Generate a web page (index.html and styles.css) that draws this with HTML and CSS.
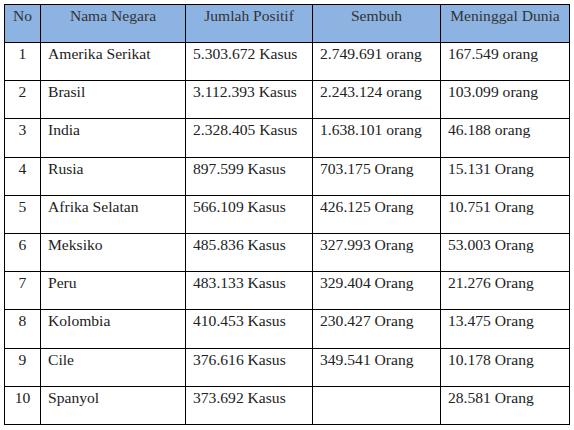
FILE: index.html
```html
<!DOCTYPE html>
<html>
<head>
<meta charset="utf-8">
<link rel="stylesheet" href="styles.css">
</head>
<body>
<table class="data">
  <colgroup>
    <col class="c-no"><col class="c-name"><col class="c-pos"><col class="c-rec"><col class="c-dead">
  </colgroup>
  <thead>
    <tr><th>No</th><th>Nama Negara</th><th>Jumlah Positif</th><th>Sembuh</th><th>Meninggal Dunia</th></tr>
  </thead>
  <tbody>
    <tr><td class="num">1</td><td>Amerika Serikat</td><td>5.303.672 Kasus</td><td>2.749.691 orang</td><td>167.549 orang</td></tr>
    <tr><td class="num">2</td><td>Brasil</td><td>3.112.393 Kasus</td><td>2.243.124 orang</td><td>103.099 orang</td></tr>
    <tr><td class="num">3</td><td>India</td><td>2.328.405 Kasus</td><td>1.638.101 orang</td><td>46.188 orang</td></tr>
    <tr><td class="num">4</td><td>Rusia</td><td>897.599 Kasus</td><td>703.175 Orang</td><td>15.131 Orang</td></tr>
    <tr><td class="num">5</td><td>Afrika Selatan</td><td>566.109 Kasus</td><td>426.125 Orang</td><td>10.751 Orang</td></tr>
    <tr><td class="num">6</td><td>Meksiko</td><td>485.836 Kasus</td><td>327.993 Orang</td><td>53.003 Orang</td></tr>
    <tr><td class="num">7</td><td>Peru</td><td>483.133 Kasus</td><td>329.404 Orang</td><td>21.276 Orang</td></tr>
    <tr><td class="num">8</td><td>Kolombia</td><td>410.453 Kasus</td><td>230.427 Orang</td><td>13.475 Orang</td></tr>
    <tr><td class="num">9</td><td>Cile</td><td>376.616 Kasus</td><td>349.541 Orang</td><td>10.178 Orang</td></tr>
    <tr><td class="num">10</td><td>Spanyol</td><td>373.692 Kasus</td><td></td><td>28.581 Orang</td></tr>
  </tbody>
</table>
</body>
</html>
```

FILE: styles.css
```css
html, body {
  margin: 0;
  padding: 0;
  background: #ffffff;
}
body {
  padding: 4px;
  font-family: "Liberation Serif", "Tinos", "Times New Roman", serif;
  font-size: 15.6px;
  color: #222222;
}
.data {
  border-collapse: collapse;
  table-layout: fixed;
  width: 565px;
  font-family: "Liberation Serif", "Tinos", "Times New Roman", serif;
}
.c-no { width: 36px; }
.c-name { width: 145px; }
.c-pos { width: 127px; }
.c-rec { width: 128px; }
.c-dead { width: 129px; }
.data th, .data td {
  border: 1px solid #000;
  vertical-align: top;
  padding: 2px 7px 0 7px;
  line-height: 18px;
  white-space: nowrap;
  overflow: hidden;
}
.data th {
  background: #8db3e2;
  font-weight: normal;
  text-align: center;
  color: #333333;
  height: 35px;
}
.data td {
  height: 35.2px;
  text-align: left;
}
.data td.num {
  text-align: center;
  padding-left: 0;
  padding-right: 0;
}
```
